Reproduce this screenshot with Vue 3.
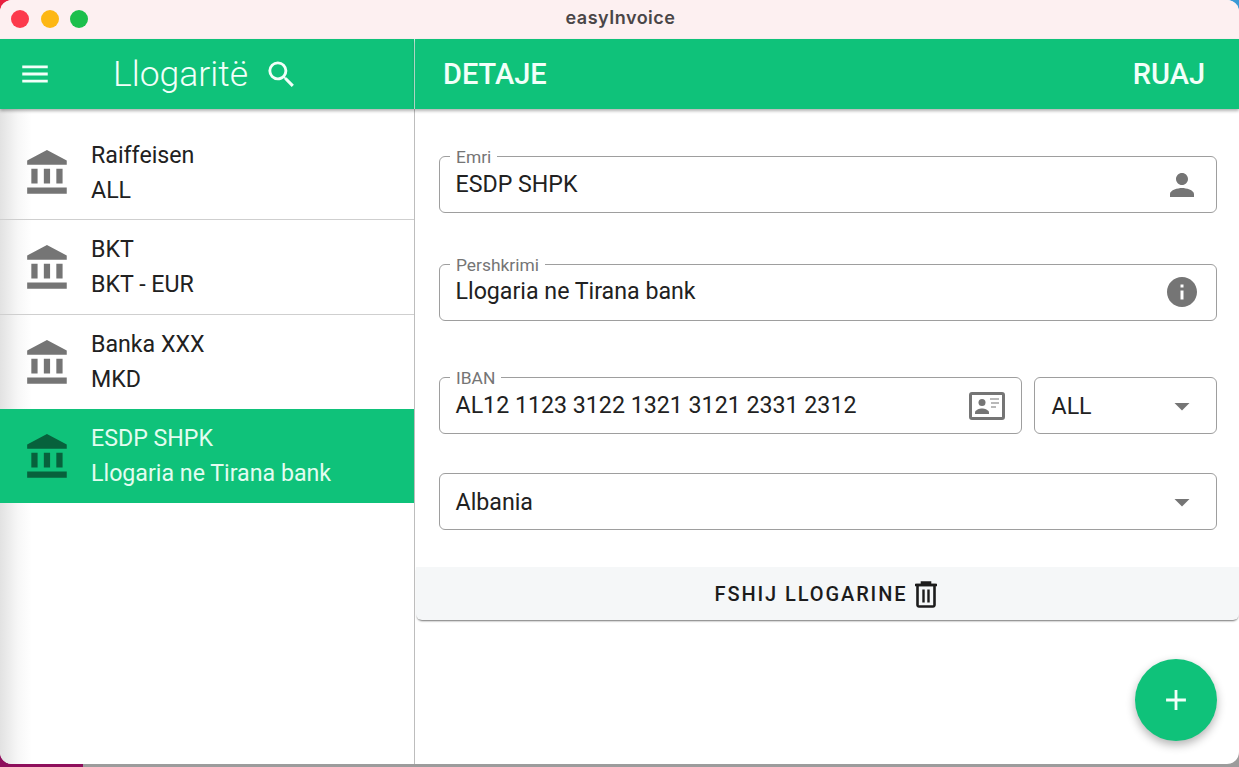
<template>
  <div class="desktop">
    <div class="window">
      <div class="titlebar">
        <div class="lights">
          <span class="light red"></span>
          <span class="light yellow"></span>
          <span class="light green"></span>
        </div>
        <div class="app-title">easyInvoice</div>
      </div>

      <div class="panes">
        <aside class="sidebar">
          <header class="toolbar side-toolbar">
            <svg class="menu-icon" viewBox="0 0 24 24"><path d="M3 18h18v-2H3v2zm0-5h18v-2H3v2zm0-7v2h18V6H3z" /></svg>
            <span class="side-title">Llogaritë</span>
            <svg class="search-icon" viewBox="0 0 24 24"><path d="M15.500 14h-.79l-.28-.27A6.470 6.470 0 0 0 16 9.500 6.500 6.500 0 1 0 9.500 16c1.610 0 3.090-.59 4.230-1.570l.27.28v.79l5 4.990L20.490 19l-4.990-5zm-6 0C7.010 14 5 11.990 5 9.500S7.010 5 9.500 5 14 7.010 14 9.500 11.990 14 9.500 14z" /></svg>
          </header>
          <ul class="accounts">
            <li v-for="a in accounts" :key="a.name" class="account" :class="{ selected: a.selected }">
              <svg class="bank-icon" viewBox="0 0 24 24"><path d="M4 10v7h3v-7H4zm6 0v7h3v-7h-3zM2 22h19v-3H2v3zm14-12v7h3v-7h-3zm-4.500-9L2 6v2h19V6l-9.500-5z" /></svg>
              <div class="account-text">
                <div>{{ a.name }}</div>
                <div>{{ a.sub }}</div>
              </div>
            </li>
          </ul>
        </aside>

        <main class="details">
          <header class="toolbar detail-toolbar">
            <span>DETAJE</span>
            <span>RUAJ</span>
          </header>

          <div class="form">
            <div class="field emri">
              <label>Emri</label>
              <span class="value">ESDP SHPK</span>
              <svg class="field-icon" viewBox="0 0 24 24"><path d="M12 12c2.210 0 4-1.790 4-4s-1.790-4-4-4-4 1.790-4 4 1.790 4 4 4zm0 2c-2.670 0-8 1.340-8 4v2h16v-2c0-2.660-5.330-4-8-4z" /></svg>
            </div>
            <div class="field desc">
              <label>Pershkrimi</label>
              <span class="value">Llogaria ne Tirana bank</span>
              <svg class="field-icon info" viewBox="0 0 24 24"><path d="M12 2C6.480 2 2 6.480 2 12s4.480 10 10 10 10-4.480 10-10S17.520 2 12 2zm1 15h-2v-6h2v6zm0-8h-2V7h2v2z" /></svg>
            </div>
            <div class="iban-row">
              <div class="field iban">
                <label>IBAN</label>
                <span class="value">AL12 1123 3122 1321 3121 2331 2312</span>
                <svg class="card-icon" viewBox="0 0 36 28">
                  <rect x="1.500" y="1.500" width="33" height="25" rx="1.500" fill="none" stroke="#757575" stroke-width="3" />
                  <circle cx="13" cy="10.500" r="3.500" fill="#757575" />
                  <path d="M6 22v-1.500c0-2.500 4.500-4 7-4s7 1.500 7 4V22z" fill="#757575" />
                  <path d="M21 7h9M22 11h8M22 15h5" stroke="#757575" stroke-width="1.200" fill="none" />
                </svg>
              </div>
              <div class="field currency">
                <span class="value">ALL</span>
                <svg class="field-icon caret" viewBox="0 0 24 24"><path d="M7 10l5 5 5-5z" /></svg>
              </div>
            </div>
            <div class="field country">
              <span class="value">Albania</span>
              <svg class="field-icon caret" viewBox="0 0 24 24"><path d="M7 10l5 5 5-5z" /></svg>
            </div>
          </div>

          <button class="delete-btn">
            <span>FSHIJ LLOGARINE</span>
            <svg class="trash-icon" viewBox="0 0 24 28">
              <path d="M1 5h22M8 5V2.500h8V5" fill="none" stroke="#1c1c1c" stroke-width="2.600" />
              <path d="M3.500 5h17v20a1.500 1.500 0 0 1-1.500 1.500H5A1.500 1.500 0 0 1 3.500 25z" fill="none" stroke="#1c1c1c" stroke-width="2.600" />
              <path d="M9.500 9.500v13M14.500 9.500v13" fill="none" stroke="#1c1c1c" stroke-width="2.400" />
            </svg>
          </button>

          <button class="fab" aria-label="add">
            <svg viewBox="0 0 24 24"><path d="M19 13h-6v6h-2v-6H5v-2h6V5h2v6h6v2z" /></svg>
          </button>
        </main>
      </div>
    </div>
  </div>
</template>

<script setup>
const accounts = [
  { name: 'Raiffeisen', sub: 'ALL' },
  { name: 'BKT', sub: 'BKT - EUR' },
  { name: 'Banka XXX', sub: 'MKD' },
  { name: 'ESDP SHPK', sub: 'Llogaria ne Tirana bank', selected: true }
]
</script>

<style>
html, body {
  margin: 0;
  overflow: hidden;
}
</style>

<style scoped>
/* wallpaper only shows in the window's corners and along the bottom edge */
.desktop {
  width: 1239px;
  height: 767px;
  overflow: hidden;
  background:
    linear-gradient(#e8203f, #e8203f) 0 0 / 20px 20px no-repeat,
    linear-gradient(#3a9ad6, #3a9ad6) 100% 0 / 20px 20px no-repeat,
    linear-gradient(90deg, #8e0f5c 0, #8e0f5c 83px, #9c9c9c 83px);
  font-family: Roboto, "Liberation Sans", sans-serif;
  color: #212121;
}

.window {
  height: 764px;
  display: flex;
  flex-direction: column;
  overflow: hidden;
  background: #fff;
  border-radius: 12px;
}

.titlebar {
  height: 39px;
  flex: none;
  display: flex;
  align-items: center;
  background: #fdf0f1;
  position: relative;
}

.lights {
  display: flex;
  gap: 11.500px;
  padding: 0 0 1px 11px;
}

.light {
  width: 18px;
  height: 18px;
  border-radius: 50%;
}

.red { background: #fc3a4c; }
.yellow { background: #fdb714; }
.green { background: #1cbf4c; }

.app-title {
  position: absolute;
  left: 2px;
  right: 0;
  top: 8px;
  text-align: center;
  font-family: Inter, Roboto, sans-serif;
  font-size: 18px;
  line-height: 20px;
  font-weight: 600;
  letter-spacing: 0.5px;
  color: #4a4648;
}

.panes {
  flex: 1;
  display: flex;
  min-height: 0;
}

.sidebar {
  width: 415px;
  flex: none;
  display: flex;
  flex-direction: column;
}

.toolbar {
  height: 70px;
  flex: none;
  box-sizing: border-box;
  display: flex;
  align-items: center;
  background: #0fc27a;
  color: #f2fff9;
  box-shadow: 0 2px 3px rgba(0, 0, 0, 0.3);
  position: relative;
}

.side-toolbar {
  border-right: 1px solid #c4f0dc;
}

.menu-icon {
  width: 34px;
  height: 34px;
  margin-left: 18px;
  fill: #f2fff9;
}

.side-title {
  margin-left: 61px;
  font-size: 35.500px;
  font-weight: 300;
}

.search-icon {
  width: 35px;
  height: 35px;
  margin-left: 16px;
  fill: #f2fff9;
}

.accounts {
  flex: 1;
  list-style: none;
  margin: 0;
  padding: 16.500px 0 0;
  border-right: 1px solid #bdbdbd;
  background: linear-gradient(90deg, #e2e2e2 0, #f7f7f7 18px, #fff 32px);
}

.account {
  height: 94.500px;
  box-sizing: border-box;
  display: flex;
  align-items: center;
  padding-left: 23px;
  border-bottom: 1px solid #cfcfcf;
  font-size: 23.200px;
}

.account:nth-child(3) {
  border-bottom: none;
}

.account.selected {
  height: 93.500px;
  background: #0fc27a;
  color: #e3fcf0;
  border-bottom: none;
}

.bank-icon {
  width: 50px;
  height: 50px;
  margin-top: 2px;
  flex: none;
  fill: #757575;
}

.selected .bank-icon {
  fill: #07613c;
}

.account-text {
  margin-left: 18px;
  display: flex;
  flex-direction: column;
  gap: 7px;
  line-height: 28px;
}

.details {
  flex: 1;
  min-width: 0;
  display: flex;
  flex-direction: column;
  position: relative;
}

.detail-toolbar {
  justify-content: space-between;
  padding: 0 34px 0 28px;
  font-size: 29px;
  font-weight: 500;
}

.form {
  padding: 47px 22px 0 24px;
}

.field {
  height: 57px;
  box-sizing: border-box;
  border: 1.500px solid #9e9e9e;
  border-radius: 6px;
  display: flex;
  align-items: center;
  justify-content: space-between;
  padding: 0 16px 0 15.500px;
  position: relative;
  font-size: 23.200px;
}

.field label {
  position: absolute;
  left: 10px;
  top: -10px;
  padding: 0 6px;
  background: #fff;
  font-size: 17.400px;
  line-height: 20px;
  color: #757575;
}

.value {
  position: relative;
  top: -1px;
}

.desc {
  margin-top: 51px;
}

.desc .value {
  top: -2px;
}

.info {
  margin-top: -2px;
}

.iban-row {
  display: flex;
  gap: 12px;
  margin-top: 56px;
}

.iban {
  flex: 1;
}

.currency {
  width: 183px;
  flex: none;
  padding-left: 16.500px;
}

.country {
  margin-top: 39px;
}

.field-icon {
  width: 36px;
  height: 36px;
  fill: #757575;
}

.currency .value,
.country .value {
  top: 0;
}

.card-icon {
  width: 36px;
  height: 28px;
  flex: none;
}

.delete-btn {
  margin-top: 37px;
  margin-left: 1px;
  height: 53px;
  flex: none;
  display: flex;
  align-items: center;
  justify-content: center;
  gap: 7px;
  border: none;
  background: #f5f7f8;
  border-radius: 0 0 6px 6px;
  box-shadow: 0 2px 2px -1px rgba(0, 0, 0, 0.55);
  font-family: inherit;
  font-size: 20px;
  font-weight: 500;
  letter-spacing: 1.900px;
  color: #1c1c1c;
  padding: 1px 2px 0 0;
}

.trash-icon {
  width: 24px;
  height: 28px;
}

.fab {
  position: absolute;
  right: 22px;
  bottom: 23px;
  width: 82px;
  height: 82px;
  border: none;
  border-radius: 50%;
  background: #0fc27a;
  box-shadow: 0 4px 10px rgba(0, 0, 0, 0.3);
  display: flex;
  align-items: center;
  justify-content: center;
  padding: 0;
}

.fab svg {
  width: 34px;
  height: 34px;
  fill: #f2fff9;
}
</style>
